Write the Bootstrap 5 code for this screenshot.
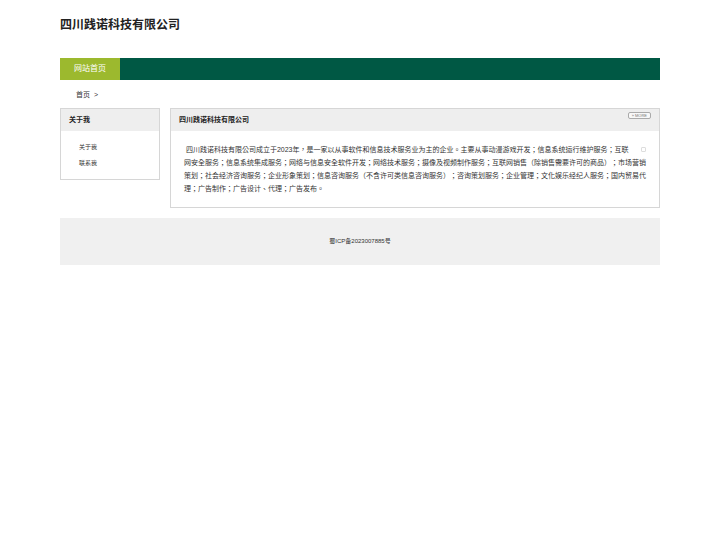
<!DOCTYPE html>
<html lang="zh-CN">
<head>
  <meta charset="UTF-8">
  <title>四川践诺科技有限公司</title>
  <meta name="viewport" content="width=device-width, initial-scale=1">
  <link href="https://cdn.jsdelivr.net/npm/bootstrap@5.3.0/dist/css/bootstrap.min.css" rel="stylesheet">
  <style>
    body { font-family: "Liberation Sans", "Noto Sans CJK SC", sans-serif; font-size: 7px; line-height: 13px; color: #333; background: #fff; text-spacing-trim: space-all; }
    a { color: inherit; text-decoration: none; }
    .page { max-width: 600px; }
    .site-title { font-size: 12px; line-height: 18px; color: #222; }
    .site-nav { background: #005844; }
    .site-nav .nav-link { background: #9cb92e; color: #fff; font-size: 8px; line-height: 22px; padding: 0 14px; }
    .crumbs { padding: 8px 16px 7px; }
    .columns { gap: 10px; margin-bottom: 10px; }
    .side { flex: 0 0 100px; }
    .panel { border: 1px solid #d6d6d6; }
    .panel-head { background: #eee; padding: 0 8px; }
    .panel-head h2 { font-size: 7px; line-height: 22px; color: #222; }
    .side-links { padding: 8px 18px; font-size: 6px; line-height: 16px; }
    .more-link { border: 1px solid #aaa; border-radius: 2px; background: #f8f8f8; color: #777; font-size: 4px; line-height: 5px; padding: 0 3px; margin-top: 3px; }
    .article { padding: 12px 13px; font-family: "Liberation Sans", "Noto Sans CJK TC", sans-serif; font-feature-settings: "locl" 0; }
    .thumb { width: 5px; height: 5px; border: 1px solid #ddd; border-radius: 1px; margin: 4px 0 0 9px; }
    .site-footer { background: #f0f0f0; font-size: 6px; line-height: 15px; padding: 16px; }
  </style>
</head>
<body>

  <div class="page mx-auto">
    <header class="pt-3 pb-4">
      <h1 class="site-title fw-bold m-0">四川践诺科技有限公司</h1>
    </header>

    <nav class="site-nav d-flex" aria-label="主导航">
      <a class="nav-link" href="#">网站首页</a>
    </nav>

    <div class="crumbs"><a href="#">首页</a>&nbsp; &gt;</div>

    <div class="columns d-flex align-items-start">
      <aside class="side panel">
        <div class="panel-head">
          <h2 class="fw-bold m-0">关于我</h2>
        </div>
        <ul class="side-links list-unstyled m-0">
          <li><a href="#about">关于我</a></li>
          <li><a href="#contact">联系我</a></li>
        </ul>
      </aside>

      <main class="panel flex-fill" id="about">
        <div class="panel-head d-flex justify-content-between align-items-start">
          <h2 class="fw-bold m-0">四川践诺科技有限公司</h2>
          <a class="more-link" href="#about">» MORE</a>
        </div>
        <div class="article">
          <span class="thumb float-end"></span>
          <p class="m-0">&nbsp;四川践诺科技有限公司成立于2023年，是一家以从事软件和信息技术服务业为主的企业。主要从事动漫游戏开发；信息系统运行维护服务；互联网安全服务；信息系统集成服务；网络与信息安全软件开发；网络技术服务；摄像及视频制作服务；互联网销售（除销售需要许可的商品）；市场营销策划；社会经济咨询服务；企业形象策划；信息咨询服务（不含许可类信息咨询服务）；咨询策划服务；企业管理；文化娱乐经纪人服务；国内贸易代理；广告制作；广告设计、代理；广告发布。</p>
        </div>
      </main>
    </div>

    <footer class="site-footer text-center" id="contact">
      <a href="#">蜀ICP备2023007885号</a>
    </footer>
  </div>

  <script src="https://cdn.jsdelivr.net/npm/bootstrap@5.3.0/dist/js/bootstrap.bundle.min.js"></script>
</body>
</html>
